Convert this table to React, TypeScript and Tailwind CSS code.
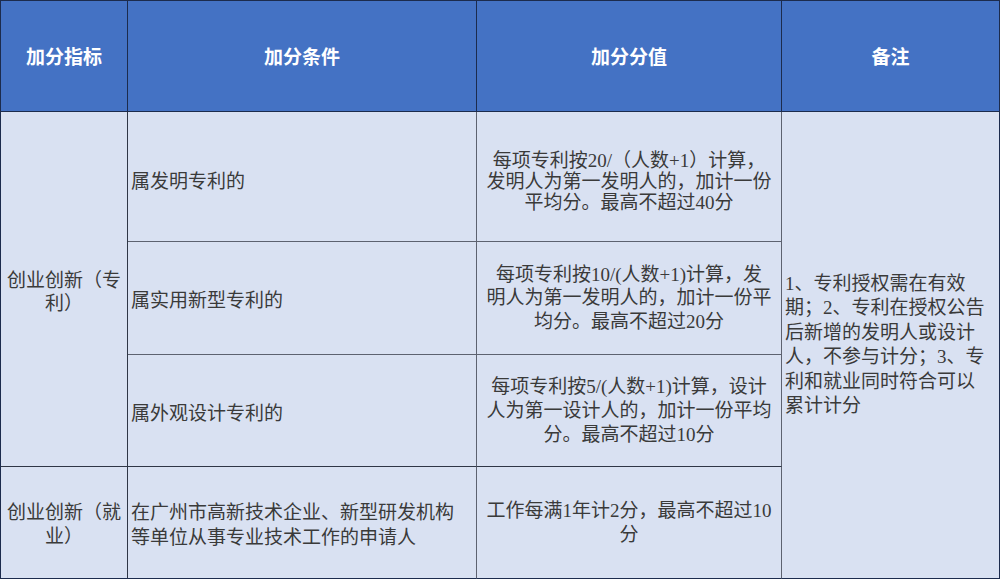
import React from "react";

const body = "bg-[#d9e1f2] text-[#3a3a3a]";
const sans = "[font-family:'Noto_Sans_CJK_SC',sans-serif]";
const serifMix = "[font-family:'Liberation_Serif','Noto_Sans_CJK_SC',serif]";

function Lines({ lines }: { lines: string[] }) {
  return (
    <>
      {lines.map((l, i) => (
        <span key={i} className="block whitespace-nowrap">
          {l}
        </span>
      ))}
    </>
  );
}

export default function App() {
  const hdr =
    "bg-[#4472c4] text-white font-bold text-[19px] flex items-center justify-center border-b border-b-[#1c2b4d] border-r border-r-[#1c2b4d]";
  return (
    <div className="w-[1000px] h-[579px] bg-white">
      <div
        className={`grid grid-cols-[127px_349px_305px_218px] grid-rows-[111px_130px_113px_112px_112px] border-l border-t border-[#1c2b4d] ${sans}`}
      >
        <div className={hdr}>加分指标</div>
        <div className={hdr}>加分条件</div>
        <div className={hdr}>加分分值</div>
        <div className={hdr}>备注</div>

        {/* col1 merged rows 1-3 */}
        <div
          className={`${body} row-span-3 border-r border-r-[#2f3646] border-b border-b-[#2f3646] flex flex-col items-center justify-center text-[19px] leading-[23px] text-center pt-[2px]`}
        >
          <Lines lines={["创业创新（专", "利）"]} />
        </div>

        {/* row1 col2 */}
        <div
          className={`${body} border-r border-r-[#5d6270] border-b border-b-[#5d6270] flex items-center pl-[3px] text-[19px] leading-[24px] pt-[6px]`}
        >
          属发明专利的
        </div>
        {/* row1 col3 */}
        <div
          className={`${body} border-r border-r-[#5d6270] border-b border-b-[#5d6270] flex flex-col items-center justify-center text-center text-[19px] leading-[21px] pt-[10px] ${serifMix}`}
        >
          <Lines
            lines={[
              "每项专利按20/（人数+1）计算，",
              "发明人为第一发明人的，加计一份",
              "平均分。最高不超过40分",
            ]}
          />
        </div>
        {/* col4 merged rows 1-4 */}
        <div
          className={`${body} row-span-4 border-r border-r-[#1c2b4d] border-b border-b-[#1c2b4d] flex flex-col justify-center pl-[3px] text-[19px] leading-[24.5px] ${serifMix}`}
        >
          <Lines
            lines={[
              "1、专利授权需在有效",
              "期；2、专利在授权公告",
              "后新增的发明人或设计",
              "人，不参与计分；3、专",
              "利和就业同时符合可以",
              "累计计分",
            ]}
          />
        </div>

        {/* row2 */}
        <div
          className={`${body} border-r border-r-[#5d6270] border-b border-b-[#5d6270] flex items-center pl-[3px] text-[19px] leading-[24px] pt-[2px]`}
        >
          属实用新型专利的
        </div>
        <div
          className={`${body} border-r border-r-[#5d6270] border-b border-b-[#5d6270] flex flex-col items-center justify-center text-center text-[19px] leading-[23.5px] ${serifMix}`}
        >
          <Lines
            lines={[
              "每项专利按10/(人数+1)计算，发",
              "明人为第一发明人的，加计一份平",
              "均分。最高不超过20分",
            ]}
          />
        </div>

        {/* row3 */}
        <div
          className={`${body} border-r border-r-[#5d6270] border-b border-b-[#2f3646] flex items-center pl-[3px] text-[19px] leading-[24px] pt-[2px]`}
        >
          属外观设计专利的
        </div>
        <div
          className={`${body} border-r border-r-[#5d6270] border-b border-b-[#2f3646] flex flex-col items-center justify-center text-center text-[19px] leading-[24px] ${serifMix}`}
        >
          <Lines
            lines={[
              "每项专利按5/(人数+1)计算，设计",
              "人为第一设计人的，加计一份平均",
              "分。最高不超过10分",
            ]}
          />
        </div>

        {/* row4 */}
        <div
          className={`${body} border-r border-r-[#2f3646] border-b border-b-[#1c2b4d] flex flex-col items-center justify-center text-center text-[19px] leading-[24px]`}
        >
          <Lines lines={["创业创新（就", "业）"]} />
        </div>
        <div
          className={`${body} border-r border-r-[#5d6270] border-b border-b-[#1c2b4d] flex flex-col justify-center pl-[3px] text-[19px] leading-[25px]`}
        >
          <Lines
            lines={[
              "在广州市高新技术企业、新型研发机构",
              "等单位从事专业技术工作的申请人",
            ]}
          />
        </div>
        <div
          className={`${body} border-r border-r-[#5d6270] border-b border-b-[#1c2b4d] flex flex-col items-center justify-center text-center text-[19px] leading-[24px] ${serifMix}`}
        >
          <Lines lines={["工作每满1年计2分，最高不超过10", "分"]} />
        </div>
      </div>
    </div>
  );
}
